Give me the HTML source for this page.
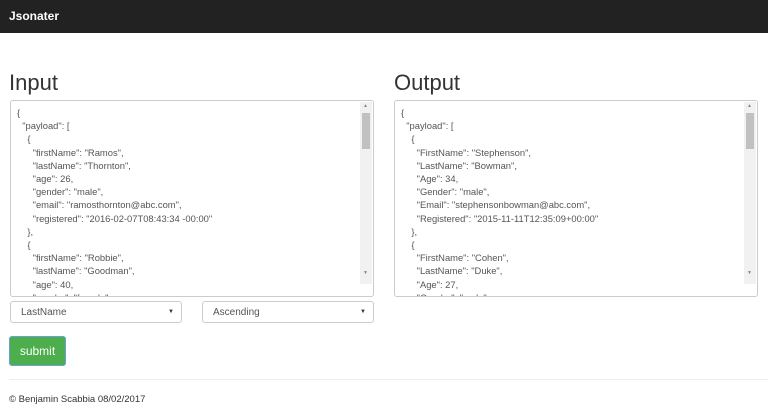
<!DOCTYPE html>
<html><head><meta charset="utf-8"><style>
*{box-sizing:border-box;margin:0;padding:0}
body{width:768px;height:409px;overflow:hidden;background:#fff;font-family:"Liberation Sans",Arial,sans-serif;color:#333;position:relative}
.nav{position:absolute;left:0;top:0;width:768px;height:33px;background:#222;}
.nav span{position:absolute;left:9px;top:9px;color:#fff;font-weight:bold;font-size:12px}
h2{position:absolute;font-weight:normal;font-size:22px;color:#333;top:70px}
.ta{position:absolute;top:100px;height:197px;border:1px solid #ccc;border-radius:3px;overflow:hidden;background:#fff}
.ta pre{font-family:"Liberation Sans",Arial,sans-serif;font-size:9.4px;line-height:13.2px;color:#555;position:absolute;left:6px;top:5px;white-space:pre}
.sb{position:absolute;right:1px;top:1px;width:12px;bottom:12px;background:#f1f1f1}
.th{position:absolute;left:2px;width:8px;top:11px;height:36px;background:#c1c1c1}
.ar{position:absolute;left:3px;font-size:5px;color:#888}
.sel{position:absolute;top:301px;height:22px;border:1px solid #ccc;border-radius:3px;font-size:10px;color:#555;padding:5px 0 0 10px}
.sel i{position:absolute;right:7px;top:7px;font-style:normal;font-size:6px;color:#333}
.btn{position:absolute;left:9px;top:336px;width:57px;height:30px;background:#4cae4c;border:1px solid #6a9fd8;border-radius:3px;color:#fff;font-size:12px;text-align:center;line-height:28px}
.hr{position:absolute;left:9px;right:0;top:379px;border-top:1px solid #eee}
.ft{position:absolute;left:9px;top:394px;font-size:9.5px;color:#333}
</style></head><body>
<div class="nav"><span>Jsonater</span></div>
<h2 style="left:9px">Input</h2>
<h2 style="left:394px">Output</h2>
<div class="ta" style="left:10px;width:364px"><pre>{
  "payload": [
    {
      "firstName": "Ramos",
      "lastName": "Thornton",
      "age": 26,
      "gender": "male",
      "email": "ramosthornton@abc.com",
      "registered": "2016-02-07T08:43:34 -00:00"
    },
    {
      "firstName": "Robbie",
      "lastName": "Goodman",
      "age": 40,
      "gender": "female",</pre><div class="sb"><span class="ar" style="top:1px">▲</span><div class="th"></div><span class="ar" style="bottom:8px;position:absolute">▼</span></div></div>
<div class="ta" style="left:394px;width:364px"><pre>{
  "payload": [
    {
      "FirstName": "Stephenson",
      "LastName": "Bowman",
      "Age": 34,
      "Gender": "male",
      "Email": "stephensonbowman@abc.com",
      "Registered": "2015-11-11T12:35:09+00:00"
    },
    {
      "FirstName": "Cohen",
      "LastName": "Duke",
      "Age": 27,
      "Gender": "male",</pre><div class="sb"><span class="ar" style="top:1px">▲</span><div class="th"></div><span class="ar" style="bottom:8px;position:absolute">▼</span></div></div>
<div class="sel" style="left:10px;width:172px">LastName<i>▼</i></div>
<div class="sel" style="left:202px;width:172px">Ascending<i>▼</i></div>
<div class="btn">submit</div>
<div class="hr"></div>
<div class="ft">© Benjamin Scabbia 08/02/2017</div>
</body></html>
